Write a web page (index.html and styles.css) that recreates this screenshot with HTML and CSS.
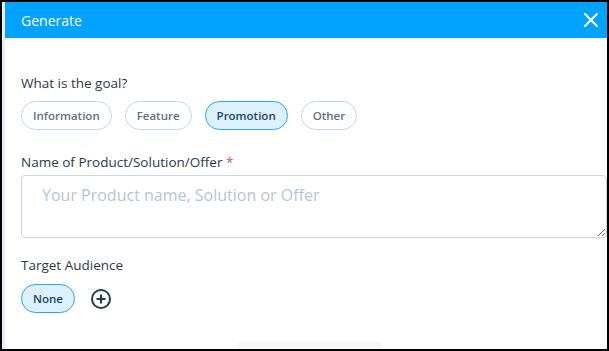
FILE: index.html
```html
<!DOCTYPE html>
<html lang="en">

<head>
	<meta charset="UTF-8">
	<title>Generate</title>
	<link rel="stylesheet" href="styles.css">
</head>

<body>
	<div class="dialog">
		<div class="dialog-header">
			<span class="dialog-title">Generate</span>
			<button class="close-btn" aria-label="Close">
				<svg width="14" height="14" viewBox="0 0 14 14">
					<path d="M1 1 L13 13 M13 1 L1 13" stroke="#fff" stroke-width="2" stroke-linecap="square" />
				</svg>
			</button>
		</div>

		<div class="dialog-body">
			<div class="field field-goal">
				<span class="field-label">What is the goal?</span>
				<div class="chips">
					<button class="chip">Information</button>
					<button class="chip">Feature</button>
					<button class="chip active">Promotion</button>
					<button class="chip">Other</button>
				</div>
			</div>

			<div class="field field-name">
				<label class="field-label" for="product">Name of Product/Solution/Offer <span class="required">*</span></label>
				<textarea id="product" placeholder="Your Product name, Solution or Offer"></textarea>
			</div>

			<div class="field field-audience">
				<span class="field-label">Target Audience</span>
				<div class="chips">
					<button class="chip active">None</button>
					<button class="add-btn" aria-label="Add">
						<svg width="22" height="22" viewBox="0 0 22 22">
							<circle cx="11" cy="11" r="9" fill="none" stroke="#2b3a4b" stroke-width="2" />
							<path d="M11 6.5 V15.5 M6.5 11 H15.5" stroke="#2b3a4b" stroke-width="2" />
						</svg>
					</button>
				</div>
			</div>
		</div>

		<div class="dialog-footer">
			<div class="footer-btn"></div>
		</div>
		<div class="side-mark"></div>
	</div>
</body>

</html>
```

FILE: styles.css
```css
body {
	margin: 0;
	background-color: #000;
	font-family: "Open Sans", "Noto Sans", sans-serif;
	color: #2b3a4b;
}

.dialog {
	position: relative;
	margin: 2px 2px 0 2px;
	height: 347px;
	background-color: #fff;
	border-left: 3px solid #e9eff4;
	box-sizing: border-box;
	overflow: hidden;
	display: flex;
	flex-direction: column;
}

.dialog-header {
	background-color: #02a3fe;
	height: 36px;
	display: flex;
	align-items: center;
	justify-content: space-between;
	padding: 0 9px 0 16px;
	flex-shrink: 0;
}

.dialog-title {
	color: #fff;
	font-size: 14px;
}

.close-btn {
	background: none;
	border: none;
	padding: 0;
	width: 14px;
	height: 14px;
	display: flex;
	cursor: pointer;
}

.dialog-body {
	padding: 36px 0 0 16px;
	display: flex;
	flex-direction: column;
	flex: 1;
}

.field {
	display: flex;
	flex-direction: column;
}

.field-goal {
	gap: 9px;
}

.field-name {
	margin-top: 23px;
	gap: 4px;
}

.field-audience {
	margin-top: 18px;
	gap: 10px;
}

.field-label {
	font-size: 13.5px;
	line-height: 18px;
	color: #2b3a4b;
}

.required {
	color: #e5484d;
}

.chips {
	display: flex;
	align-items: center;
	gap: 13px;
}

.chip {
	font-family: "Open Sans", sans-serif;
	font-size: 11.5px;
	font-weight: 600;
	color: #5f7184;
	background-color: #fff;
	border: 1px solid #c8d4e0;
	border-radius: 15px;
	height: 29px;
	padding: 0 11px;
	cursor: pointer;
}

.chip.active {
	background-color: #dcf0fe;
	border-color: #28a6f2;
	color: #1f4566;
}

.add-btn {
	background: none;
	border: none;
	padding: 0;
	margin-left: 2px;
	display: flex;
	cursor: pointer;
}

textarea {
	font-family: "Open Sans", "Noto Sans", sans-serif;
	font-size: 16px;
	border: 1px solid #cfd5dc;
	border-radius: 4px;
	height: 63px;
	padding: 8px 20px;
	box-sizing: border-box;
	resize: vertical;
	outline: none;
	margin: 0;
}

textarea::placeholder {
	color: #b6c5d5;
}

.dialog-footer {
	display: flex;
	justify-content: center;
	height: 8px;
}

.footer-btn {
	width: 146px;
	margin-left: 7px;
	background-color: #f7f7f7;
	border-radius: 6px 6px 0 0;
}

.side-mark {
	position: absolute;
	left: -3px;
	bottom: 3px;
	width: 3px;
	height: 3px;
	background-color: #1a8fe0;
}
```
